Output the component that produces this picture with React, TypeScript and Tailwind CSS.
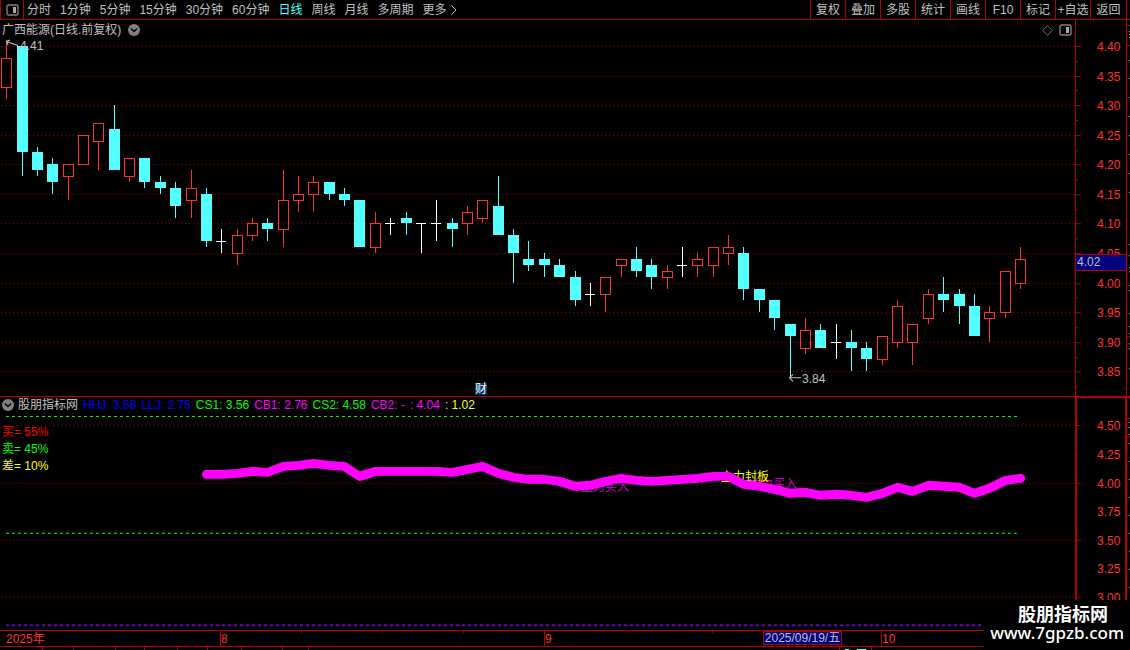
import * as React from "react";
import clsx from "clsx";

type Bar = [open: number, high: number, low: number, close: number];

// daily bars, prices in cents
const BARS: Bar[] = [
  [433, 441, 431, 438], [440, 440, 418, 422], [422, 423, 418, 419], [420, 421, 415, 417],
  [418, 420, 414, 420], [420, 425, 420, 425], [424, 427, 419, 427], [426, 430, 419, 419],
  [418, 421, 417, 421], [421, 421, 416, 417], [417, 418, 415, 416], [416, 417, 411, 413],
  [414, 419, 411, 416], [415, 416, 406, 407], [407, 409, 405, 407], [405, 409, 403, 408],
  [408, 411, 407, 410], [410, 411, 407, 409], [409, 419, 406, 414], [414, 418, 412, 415],
  [415, 418, 412, 417], [417, 417, 414, 415], [415, 416, 413, 414], [414, 414, 406, 406],
  [406, 412, 405, 410], [410, 411, 408, 410], [411, 412, 408, 410], [410, 410, 405, 410],
  [410, 414, 407, 410], [410, 411, 406, 409], [410, 413, 408, 412], [411, 414, 410, 414],
  [413, 418, 408, 408], [408, 409, 400, 405], [404, 407, 402, 403], [404, 405, 401, 403],
  [403, 404, 401, 401], [401, 402, 396, 397], [398, 400, 396, 398], [398, 401, 395, 401],
  [403, 404, 401, 404], [404, 406, 401, 402], [403, 404, 399, 401], [401, 403, 399, 402],
  [403, 406, 401, 403], [403, 405, 401, 404], [403, 406, 401, 406], [405, 408, 403, 406],
  [405, 406, 397, 399], [399, 399, 395, 397], [397, 397, 392, 394], [393, 393, 384, 391],
  [389, 394, 388, 392], [392, 393, 389, 389], [390, 393, 387, 390], [390, 392, 385, 389],
  [389, 390, 385, 387], [387, 391, 386, 391], [390, 397, 389, 396], [390, 393, 386, 393],
  [394, 399, 393, 398], [398, 401, 395, 397], [398, 399, 393, 396], [396, 398, 391, 391],
  [394, 396, 390, 395], [395, 402, 394, 402], [400, 406, 399, 404],
];

const CHART_W = 1075;
const PRICE_H = 376;
const IND_H = 233;

const barX = (i: number) => Math.round(6.2 + i * 15.36);
const priceY = (cents: number) => Math.round(26 + (440 - cents) * 5.915);
const indY = (cents: number) => Math.round(28.3 + (450 - cents) * 1.144);

const PRICE_TICKS = [440, 435, 430, 425, 420, 415, 410, 405, 400, 395, 390, 385];
const IND_TICKS = [450, 425, 400, 375, 350, 325, 300];

const PERIODS = ["分时", "1分钟", "5分钟", "15分钟", "30分钟", "60分钟", "日线", "周线", "月线", "多周期"];
const ACTIONS = ["复权", "叠加", "多股", "统计", "画线", "F10", "标记", "+自选"];

const LEGEND = [
  { text: "HHJ: 3.56", color: "text-[#0000ff]" },
  { text: "LLJ: 2.75", color: "text-[#0000ff]" },
  { text: "CS1: 3.56", color: "text-[#00ff00]" },
  { text: "CB1: 2.76", color: "text-[#ff00ff]" },
  { text: "CS2: 4.58", color: "text-[#00ff00]" },
  { text: "CB2: -", color: "text-[#ff00ff]" },
  { text: ": 4.04", color: "text-[#ff00ff]" },
  { text: ": 1.02", color: "text-[#ffff00]" },
];

const RATIOS = [
  { text: "买= 55%", color: "text-[#ff0000]" },
  { text: "卖= 45%", color: "text-[#00ff00]" },
  { text: "差= 10%", color: "text-[#ffff00]" },
];

const FOOT_TABS = [43, 31, 42, 29, 33, 30, 34, 41, 26];

function PanelIcon() {
  return (
    <svg width="13" height="12" viewBox="0 0 13 12" aria-hidden="true">
      <rect x="1" y="1" width="11" height="10" rx="1.5" fill="none" stroke="#808080" strokeWidth="1.4" />
      <rect x="7" y="3" width="3" height="6" fill="#a8a8a8" />
    </svg>
  );
}

function CircleChevron() {
  return (
    <svg width="12" height="12" viewBox="0 0 12 12" aria-hidden="true">
      <circle cx="6" cy="6" r="6" fill="#808080" />
      <path d="M3 4.5 L6 7.5 L9 4.5" fill="none" stroke="#000" strokeWidth="1.4" />
    </svg>
  );
}

// text pinned to a point of a chart, vertically centred on it
function Pin({ x, y, w, h, className, children }: {
  x: number;
  y: number;
  w: number;
  h: number;
  className?: string;
  children: React.ReactNode;
}) {
  return (
    <span
      className={clsx("absolute -translate-y-1/2 leading-3 whitespace-nowrap", className)}
      style={{ left: `${(x / w) * 100}%`, top: `${(y / h) * 100}%` }}
    >
      {children}
    </span>
  );
}

function GridLine({ y }: { y: number }) {
  return <line x1="1" x2={CHART_W} y1={y + 0.5} y2={y + 0.5} stroke="#a80000" strokeDasharray="1 3" />;
}

function Candle({ bar, x }: { bar: Bar; x: number }) {
  const [open, high, low, close] = bar;
  const top = priceY(Math.max(open, close));
  const bottom = priceY(Math.min(open, close));
  const hi = priceY(high);
  const lo = priceY(low);

  if (open === close) {
    return (
      <g fill="#fff">
        <rect x={x} y={hi} width="1" height={lo - hi} />
        <rect x={x - 5} y={top} width="10" height="1" />
      </g>
    );
  }
  if (close < open) {
    return (
      <g fill="#54ffff">
        <rect x={x} y={hi} width="1" height={lo - hi} />
        <rect x={x - 5} y={top} width="11" height={bottom - top} />
      </g>
    );
  }
  return (
    <g fill="#ff3232">
      <rect x={x} y={hi} width="1" height={top - hi} />
      <rect x={x} y={bottom} width="1" height={Math.max(lo - bottom, 0)} />
      <rect x={x - 4.5} y={top + 0.5} width="10" height={bottom - top} fill="none" stroke="#ff3232" />
    </g>
  );
}

function Toolbar() {
  return (
    <header className="flex h-5 shrink-0 items-stretch border-b border-[#b40000] text-[#c0c0c0]">
      <button aria-label="侧栏" className="flex w-6 items-center justify-center border-x border-[#b40000]">
        <PanelIcon />
      </button>
      <nav className="flex flex-1 items-center gap-[9px] pl-[3px]">
        {PERIODS.map((p) => (
          <button key={p} className={clsx("whitespace-nowrap", p === "日线" && "text-[#54ffff]")}>
            {p}
          </button>
        ))}
        <button className="flex items-center gap-1 whitespace-nowrap">
          更多
          <svg width="6" height="10" viewBox="0 0 6 10" aria-hidden="true">
            <path d="M0.5 0.5 L5 5 L0.5 9.5" fill="none" stroke="#c0c0c0" />
          </svg>
        </button>
      </nav>
      <div className="flex">
        {ACTIONS.map((a) => (
          <button key={a} className="w-[35px] border-l border-[#b40000] text-center whitespace-nowrap">
            {a}
          </button>
        ))}
        <button className="w-[37px] border-x border-[#b40000] text-center">返回</button>
      </div>
      <div className="w-[3px]" />
    </header>
  );
}

function PriceChart() {
  const pin = { w: CHART_W, h: PRICE_H };
  return (
    <div className="relative flex-1">
      <svg
        className="absolute inset-0 h-full w-full"
        viewBox={`0 0 ${CHART_W} ${PRICE_H}`}
        preserveAspectRatio="none"
      >
        <g shapeRendering="crispEdges">
          {PRICE_TICKS.map((t) => (
            <GridLine key={t} y={priceY(t)} />
          ))}
          {BARS.map((bar, i) => (
            <Candle key={i} bar={bar} x={barX(i)} />
          ))}
        </g>
        <path d="M6.5 21.5 L18 25.5 M6.5 21.5 L10 20 M6.5 21.5 L8 25" fill="none" stroke="#c0c0c0" />
        <path d="M789.5 357.5 H801 M793 354 L789.5 357.5 L793 361" fill="none" stroke="#c0c0c0" />
      </svg>
      <div className="relative flex items-center justify-between pt-[3px] pr-[3px] pl-[2px]">
        <h1 className="flex items-center gap-[7px] leading-[14px]">
          广西能源(日线.前复权)
          <button aria-label="选择" className="block">
            <CircleChevron />
          </button>
        </h1>
        <div className="flex items-center gap-[6px]">
          <svg width="11" height="11" viewBox="0 0 11 11" aria-hidden="true">
            <path d="M5.5 0.7 L10.3 5.5 L5.5 10.3 L0.7 5.5 Z" fill="none" stroke="#707070" />
          </svg>
          <PanelIcon />
        </div>
      </div>
      <Pin {...pin} x={20} y={26}>4.41</Pin>
      <Pin {...pin} x={802} y={359}>3.84</Pin>
      <Pin {...pin} x={475} y={369} className="bg-[#003464] text-white">财</Pin>
    </div>
  );
}

function PriceAxis() {
  return (
    <div className="relative w-[52px] border-x border-[#b40000] text-[#ff3232]">
      <svg className="absolute inset-0 h-full w-full" viewBox={`0 0 50 ${PRICE_H}`} preserveAspectRatio="none">
        {PRICE_TICKS.map((t) => (
          <g key={t} fill="#b40000">
            <rect x="0" y={priceY(t)} width="5" height="1" />
            <rect x="0" y={priceY(t - 2.5)} width="2" height="1" />
          </g>
        ))}
      </svg>
      {PRICE_TICKS.map((t) => (
        <Pin key={t} x={21} y={priceY(t) + 1} w={50} h={PRICE_H}>
          {(t / 100).toFixed(2)}
        </Pin>
      ))}
      <div className="absolute inset-x-0 top-[62.2%] h-[17px] border-y border-[#b40000] bg-[#000080] text-[#c0c0c0]">
        <span className="block pl-px leading-[15px]">4.02</span>
      </div>
    </div>
  );
}

function IndicatorChart() {
  const pin = { w: CHART_W, h: IND_H };
  const points = BARS.map((b, i) => `${barX(i) + 0.5},${indY(b[3]) + 0.5}`).slice(13).join(" ");
  return (
    <div className="relative flex-1">
      <svg className="absolute inset-0 h-full w-full" viewBox={`0 0 ${CHART_W} ${IND_H}`} preserveAspectRatio="none">
        {[450, 400, 350, 300].map((t) => (
          <GridLine key={t} y={indY(t)} />
        ))}
        <g strokeDasharray="3 3">
          <line x1="6" x2="1018" y1="19.5" y2="19.5" stroke="#00ff00" />
          <line x1="6" x2="1018" y1="136.5" y2="136.5" stroke="#00ff00" />
          <line x1="6" x2="1018" y1="228.5" y2="228.5" stroke="#ff00ff" />
          <line x1="6" x2="1018" y1="229.5" y2="229.5" stroke="#0000ff" />
        </g>
      </svg>
      <Pin {...pin} x={581} y={90} className="text-[#d000d0]">主力买入</Pin>
      <Pin {...pin} x={749} y={87} className="text-[#d000d0]">主力买入</Pin>
      <Pin {...pin} x={721} y={80} className="text-[#ffff00]">主力封板</Pin>
      <svg className="absolute inset-0 h-full w-full" viewBox={`0 0 ${CHART_W} ${IND_H}`} preserveAspectRatio="none">
        <polyline
          points={points}
          fill="none"
          stroke="#ff00ff"
          strokeWidth="9"
          strokeLinecap="round"
          strokeLinejoin="round"
        />
      </svg>
      <div className="relative flex items-center gap-[5px] pt-[2px] pl-[2px] leading-3 whitespace-nowrap">
        <button className="flex items-center gap-1">
          <CircleChevron />
          股朋指标网
        </button>
        {LEGEND.map((l) => (
          <span key={l.text} className={l.color}>
            {l.text}
          </span>
        ))}
      </div>
      <ul className="relative mt-[13px] pl-[2px]">
        {RATIOS.map((r) => (
          <li key={r.text} className={clsx("leading-[17px]", r.color)}>
            {r.text}
          </li>
        ))}
      </ul>
    </div>
  );
}

function IndicatorAxis() {
  return (
    <div className="relative w-[52px] border-x-2 border-t border-[#b40000] text-[#ff3232]">
      <svg className="absolute inset-0 h-full w-full" viewBox={`0 0 48 ${IND_H - 1}`} preserveAspectRatio="none">
        {IND_TICKS.map((t, i) => (
          <rect key={t} x="0" y={indY(t) - 1} width={i % 2 ? 1 : 4} height="1" fill="#b40000" />
        ))}
      </svg>
      {IND_TICKS.map((t) => (
        <Pin key={t} x={20} y={indY(t)} w={48} h={IND_H - 1}>
          {(t / 100).toFixed(2)}
        </Pin>
      ))}
    </div>
  );
}

// sliver of the quote panel that sits beyond the right edge
function EdgeStrip({ h, rules, marks }: { h: number; rules: number[]; marks: number[] }) {
  return (
    <svg className="h-full w-[3px]" viewBox={`0 0 3 ${h}`} preserveAspectRatio="none" aria-hidden="true">
      {rules.map((y) => (
        <rect key={y} x="0" y={y} width="3" height="1" fill="#b40000" />
      ))}
      {marks.map((y) => (
        <rect key={y} x="2" y={y} width="1" height="1" fill="#c0c0c0" />
      ))}
    </svg>
  );
}

function DateAxis() {
  const pin = { w: 1130, h: 15 };
  return (
    <div className="relative h-4 shrink-0 border-t border-[#b40000] text-[#ff3232]">
      <svg className="absolute inset-0 h-full w-full" viewBox="0 0 1130 15" preserveAspectRatio="none">
        <g fill="#b40000">
          {[220, 544, 881].map((x) => (
            <rect key={x} x={x} y="0" width="1" height="15" />
          ))}
          {[301, 382, 463, 628, 712].map((x) => (
            <rect key={x} x={x} y="0" width="1" height="2" />
          ))}
        </g>
      </svg>
      <Pin {...pin} x={6} y={8}>2025年</Pin>
      <Pin {...pin} x={221} y={8}>8</Pin>
      <Pin {...pin} x={545} y={8}>9</Pin>
      <Pin {...pin} x={763} y={7} className="w-[79px] border border-[#b40000] bg-[#000080] text-center text-[#c0c0c0]">
        2025/09/19/五
      </Pin>
      <Pin {...pin} x={882} y={8}>10</Pin>
    </div>
  );
}

export default function App() {
  return (
    <main className="relative flex h-screen flex-col overflow-hidden bg-black font-['Liberation_Sans','Noto_Sans_CJK_SC',sans-serif] text-xs leading-3 text-[#c0c0c0]">
      <Toolbar />
      <section className="flex min-h-0 flex-[377] border-b border-[#b40000]">
        <PriceChart />
        <PriceAxis />
        <EdgeStrip
          h={PRICE_H}
          rules={[5, 25, 316]}
          marks={[11, 14, 17, 40, 58, 77, 96, 115, 134, 153, 172, 224, 235, 247, 251, 265, 270, 293, 306, 313, 323, 328, 348]}
        />
      </section>
      <section className="flex min-h-0 flex-[233]">
        <IndicatorChart />
        <IndicatorAxis />
        <EdgeStrip
          h={IND_H}
          rules={[0, 21, 40]}
          marks={[25, 30, 37, 46, 64, 82, 100, 118, 136, 154, 172, 190]}
        />
      </section>
      <DateAxis />
      <footer className="flex h-1 shrink-0 border-t border-[#b40000]">
        {FOOT_TABS.map((w, i) => (
          <div key={i} className="border-r border-[#b40000]" style={{ width: w }} />
        ))}
        <div className="flex-1" />
        <div className="flex w-[33px] items-end gap-2 border-x border-[#b40000] pl-[5px]">
          <span className="h-px w-1 bg-[#54ffff]" />
          <span className="h-px w-[9px] bg-[#54ffff]" />
        </div>
        <div className="w-[258px]" />
      </footer>
      <div className="absolute right-0 bottom-0 flex h-[50px] w-[146px] flex-col items-end bg-black pt-[5px] pr-[6px] text-white">
        <strong className="pr-4 text-lg leading-5">股朋指标网</strong>
        <a href="#" className="font-['Noto_Sans'] text-[17px] leading-4 font-medium">
          www.7gpzb.com
        </a>
      </div>
    </main>
  );
}
